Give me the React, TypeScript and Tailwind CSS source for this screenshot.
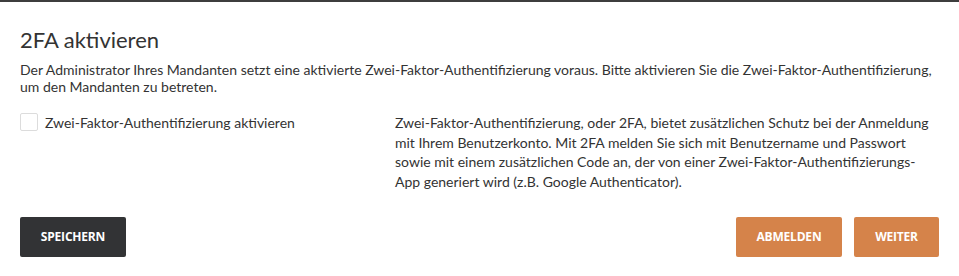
import React, { useState } from 'react';

const Button = ({ label, variant, width }: { label: string; variant: 'dark' | 'orange'; width: string }) => {
  const styles: any = {
    dark: 'bg-[#323335] hover:bg-[#26272a]',
    orange: 'bg-[#d5834a] hover:bg-[#c97740]',
  };

  return (
    <button
      className={`h-10 ${width} rounded-[2px] text-white text-[12px] font-bold uppercase tracking-[-0.2px] font-['Open_Sans',sans-serif] ${styles[variant]}`}
    >
      {label}
    </button>
  );
};

export default function App() {
  const [enabled, setEnabled] = useState(false);

  return (
    <div className="w-[959px] h-[276px] bg-white border-t-2 border-[#3d3d3d] pt-6 px-5 font-['Lato',sans-serif] text-[#333]">
      <h2 className="text-[22px] leading-[28px] font-normal">2FA aktivieren</h2>
      <p className="mt-[7px] text-[14px] leading-[17px]">
        Der Administrator Ihres Mandanten setzt eine aktivierte Zwei-Faktor-Authentifizierung voraus. Bitte aktivieren Sie
        die Zwei-Faktor-Authentifizierung, um den Mandanten zu betreten.
      </p>

      <div className="mt-[18px] grid grid-cols-[375px_1fr]">
        <label className="flex items-start gap-[7px] cursor-pointer">
          <input
            type="checkbox"
            checked={enabled}
            onChange={(e) => setEnabled(e.target.checked)}
            className="appearance-none w-[18px] h-[18px] border border-[#dcdcdc] rounded-[2px] bg-white checked:bg-[#d5834a] checked:border-[#d5834a]"
          />
          <span className="text-[14px] leading-[19.5px]">Zwei-Faktor-Authentifizierung aktivieren</span>
        </label>
        <p className="text-[14px] leading-[19.5px]">
          Zwei-Faktor-Authentifizierung, oder 2FA, bietet zusätzlichen Schutz bei der Anmeldung mit Ihrem Benutzerkonto.
          Mit 2FA melden Sie sich mit Benutzername und Passwort sowie mit einem zusätzlichen Code an, der von einer
          Zwei-Faktor-Authentifizierungs-App generiert wird (z.B. Google Authenticator).
        </p>
      </div>

      <div className="mt-[26px] flex items-center justify-between">
        <Button label="Speichern" variant="dark" width="w-[106px]" />
        <div className="flex gap-3">
          <Button label="Abmelden" variant="orange" width="w-[106px]" />
          <Button label="Weiter" variant="orange" width="w-[85px]" />
        </div>
      </div>
    </div>
  );
}
